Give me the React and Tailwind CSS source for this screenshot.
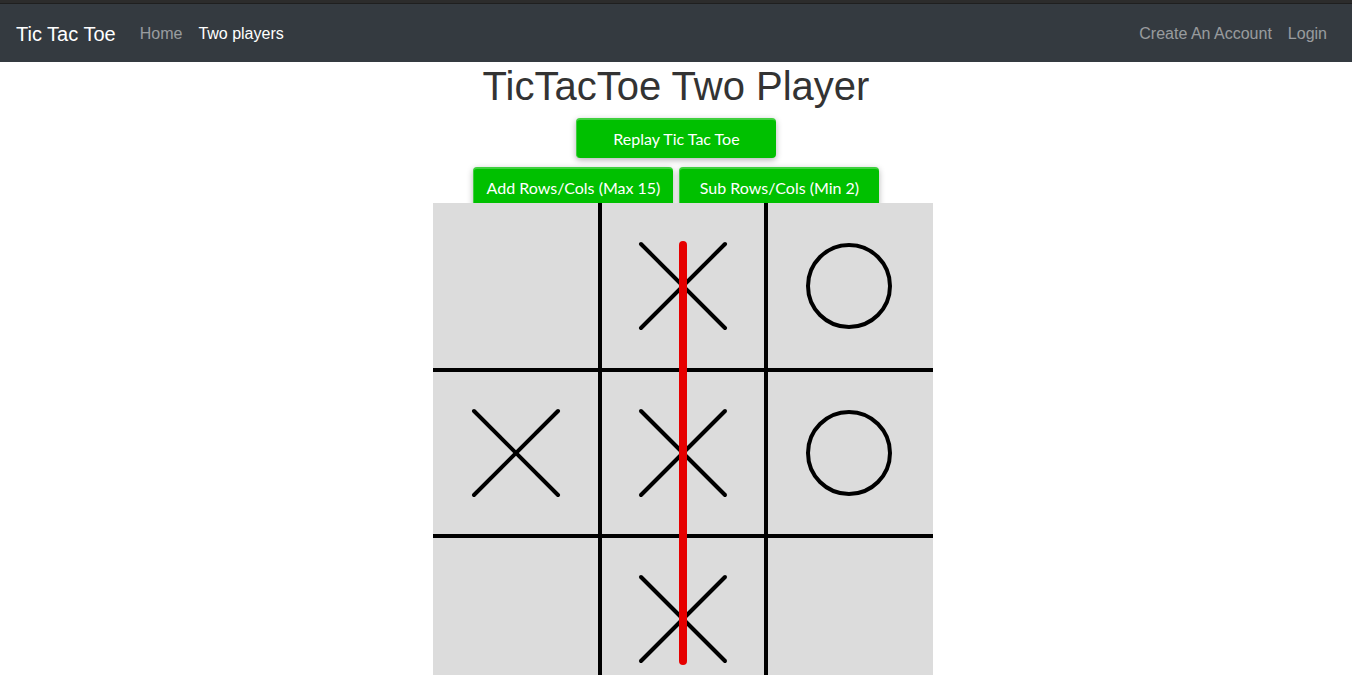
import React from "react";

const Btn = ({ children, className = "" }) => (
  <button
    className={`w-[200px] rounded-[4px] bg-[#00c000] border-t-2 border-l border-[#3fd03f] text-white text-[16px] shadow-[0_2px_6px_rgba(0,0,0,0.3)] font-['Lato',sans-serif] ${className}`}
  >
    {children}
  </button>
);

const Cross = ({ cx, cy }) => (
  <g stroke="#000" strokeWidth="4" strokeLinecap="round">
    <line x1={cx - 42} y1={cy - 42} x2={cx + 42} y2={cy + 42} />
    <line x1={cx + 42} y1={cy - 42} x2={cx - 42} y2={cy + 42} />
  </g>
);

const Circle = ({ cx, cy }) => (
  <circle cx={cx} cy={cy} r="41" fill="none" stroke="#000" strokeWidth="4" />
);

const Board = () => {
  const c = [83, 250, 416];
  return (
    <svg width="500" height="500" viewBox="0 0 500 500" className="block">
      <rect width="500" height="500" fill="#dcdcdc" />
      <g stroke="#000" strokeWidth="4">
        <line x1="167" y1="0" x2="167" y2="500" />
        <line x1="333" y1="0" x2="333" y2="500" />
        <line x1="0" y1="167" x2="500" y2="167" />
        <line x1="0" y1="333" x2="500" y2="333" />
      </g>
      <Cross cx={c[1]} cy={c[0]} />
      <Circle cx={c[2]} cy={c[0]} />
      <Cross cx={c[0]} cy={c[1]} />
      <Cross cx={c[1]} cy={c[1]} />
      <Circle cx={c[2]} cy={c[1]} />
      <Cross cx={c[1]} cy={c[2]} />
      <line x1="250" y1="42" x2="250" y2="458" stroke="#e60000" strokeWidth="8" strokeLinecap="round" />
    </svg>
  );
};

export default function App() {
  return (
    <div className="min-h-[675px] bg-white font-['Liberation_Sans',Arial,sans-serif]">
      <div className="h-[4px] bg-[#2c2c2c] border-b border-[#1f1f1f]" />
      <nav className="h-[58px] bg-[#343a40] flex items-center justify-between px-4 pt-[1px]">
        <div className="flex items-center">
          <span className="text-white text-[20px] mr-6">Tic Tac Toe</span>
          <span className="text-white/50 text-[16px] mr-4">Home</span>
          <span className="text-white text-[16px]">Two players</span>
        </div>
        <div className="flex items-center gap-4 pr-[9px] text-white/50 text-[16px]">
          <span>Create An Account</span>
          <span>Login</span>
        </div>
      </nav>
      <div className="flex flex-col items-center">
        <h1 className="text-[40px] leading-[48px] text-[#333]">TicTacToe Two Player</h1>
        <Btn className="h-[40px] mt-[8px]">Replay Tic Tac Toe</Btn>
        <div className="flex gap-[6px] mt-[9px] h-[36px] overflow-visible">
          <Btn className="h-[40px]">Add Rows/Cols (Max 15)</Btn>
          <Btn className="h-[40px]">Sub Rows/Cols (Min 2)</Btn>
        </div>
        <div className="relative ml-[14px]">
          <Board />
        </div>
      </div>
    </div>
  );
}
